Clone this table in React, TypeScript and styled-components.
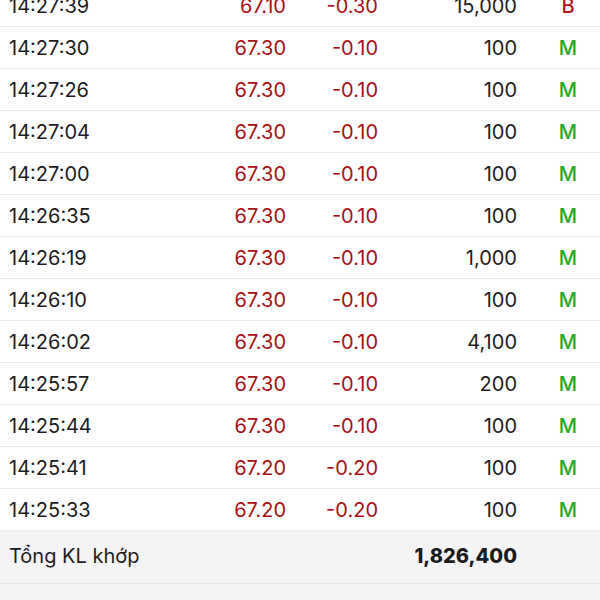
import React from "react";
import styled, { createGlobalStyle } from "styled-components";

const Global = createGlobalStyle`
  html, body { margin: 0; padding: 0; background: #f4f4f5; }
  body { font-family: "Inter", "Liberation Sans", sans-serif; }
`;

const Page = styled.div`
  width: 600px;
  height: 600px;
  overflow: hidden;
  background: #f4f4f5;
`;

const List = styled.div`
  margin-top: -15px;
  background: #ffffff;
`;

const Row = styled.div`
  display: grid;
  grid-template-columns: 150px 127px 92px 139px 1fr;
  align-items: center;
  height: 41px;
  padding-left: 9px;
  border-bottom: 1px solid #ececec;
  font-size: 20px;
  color: #1c1c1e;
`;

const Time = styled.div`
  text-align: left;
`;

const Num = styled.div<{ $red?: boolean }>`
  text-align: right;
  color: ${(p) => (p.$red ? "#a80f13" : "#1c1c1e")};
`;

const Side = styled.div<{ $buy?: boolean }>`
  text-align: center;
  padding-left: 19px;
  font-weight: 500;
  color: ${(p) => (p.$buy ? "#b3151a" : "#1fa82a")};
`;

const Footer = styled.div`
  display: grid;
  grid-template-columns: 369px 139px 1fr;
  align-items: center;
  height: 52px;
  padding-left: 9px;
  background: #f4f4f5;
  border-bottom: 1px solid #e6e6e6;
  font-size: 20px;
  color: #1c1c1e;
`;

const Label = styled.div`
  padding-bottom: 2px;
`;

const Total = styled.div`
  text-align: right;
  font-weight: 800;
  padding-bottom: 2px;
`;

const rows: [string, string, string, string, string][] = [
  ["14:27:39", "67.10", "-0.30", "15,000", "B"],
  ["14:27:30", "67.30", "-0.10", "100", "M"],
  ["14:27:26", "67.30", "-0.10", "100", "M"],
  ["14:27:04", "67.30", "-0.10", "100", "M"],
  ["14:27:00", "67.30", "-0.10", "100", "M"],
  ["14:26:35", "67.30", "-0.10", "100", "M"],
  ["14:26:19", "67.30", "-0.10", "1,000", "M"],
  ["14:26:10", "67.30", "-0.10", "100", "M"],
  ["14:26:02", "67.30", "-0.10", "4,100", "M"],
  ["14:25:57", "67.30", "-0.10", "200", "M"],
  ["14:25:44", "67.30", "-0.10", "100", "M"],
  ["14:25:41", "67.20", "-0.20", "100", "M"],
  ["14:25:33", "67.20", "-0.20", "100", "M"],
];

export default function App() {
  return (
    <>
      <Global />
      <Page>
        <List>
          {rows.map(([t, p, c, v, s], i) => (
            <Row key={i}>
              <Time>{t}</Time>
              <Num $red>{p}</Num>
              <Num $red>{c}</Num>
              <Num>{v}</Num>
              <Side $buy={s === "B"}>{s}</Side>
            </Row>
          ))}
        </List>
        <Footer>
          <Label>Tổng KL khớp</Label>
          <Total>1,826,400</Total>
        </Footer>
      </Page>
    </>
  );
}
